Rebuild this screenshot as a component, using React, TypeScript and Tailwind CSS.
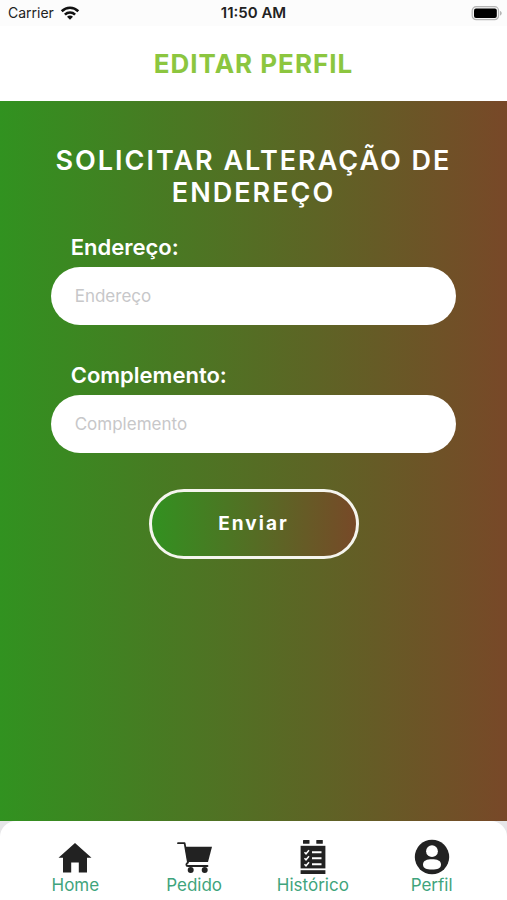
import { useState } from 'react';
import type { FormEvent } from 'react';

const HomeIcon = () => (
  <svg viewBox="0 0 36 36" className="size-9" fill="#222" aria-hidden="true">
    <path d="M18 4 1.500 18.700H6V33.500H14.200V23.500H21.800V33.500H30V18.700H34.500Z" />
  </svg>
);

const CartIcon = () => (
  <svg viewBox="0 0 36 36" className="size-9" fill="#222" aria-hidden="true">
    <path d="M9 7.800H36L32 23H11.500Z" />
    <path
      d="M2 4.200H8.600L12 23.600C9.800 24.600 9.800 27 12 27H31.500"
      fill="none"
      stroke="#222"
      strokeWidth="1.800"
      strokeLinecap="round"
      strokeLinejoin="round"
    />
    <circle cx="14.700" cy="31" r="3" />
    <circle cx="28.700" cy="31" r="3" />
  </svg>
);

const HistoryIcon = () => (
  <svg viewBox="0 0 36 36" className="size-9" fill="#222" aria-hidden="true">
    <rect x="8" y="1" width="6.500" height="3.800" rx="0.500" />
    <rect x="21.300" y="1" width="6.500" height="3.800" rx="0.500" />
    <rect x="5.600" y="6.800" width="24.800" height="22.600" />
    <rect x="5.600" y="31.200" width="24.800" height="3.800" />
    <g fill="none" stroke="#fff" strokeWidth="1.500">
      <path d="M9.500 13.200 11 14.800 14 11.200M9.500 19.200 11 20.800 14 17.200M9.500 25.200 11 26.800 14 23.200" />
      <path d="M17 13.300H26.500M17 19.300H26.500M17 25.300H26.500" strokeWidth="2" />
    </g>
  </svg>
);

const ProfileIcon = () => (
  <svg viewBox="0 0 36 36" className="size-9" fill="#222" aria-hidden="true">
    <circle cx="18" cy="18" r="17.200" />
    <circle cx="18" cy="12.200" r="5.900" fill="#fff" />
    <path
      d="M9 25.500C9 21.500 13 20.200 18 20.200S27 21.500 27 25.500C27 29.500 23.500 30.500 18 30.500S9 29.500 9 25.500Z"
      fill="#fff"
    />
  </svg>
);

const WifiIcon = () => (
  <svg viewBox="0 0 20 16" className="w-5 h-4" aria-hidden="true">
    <g fill="none" stroke="#111" strokeWidth="2.600">
      <path d="M1.700 6.200C6.500 1.600 13.500 1.600 18.300 6.200" />
      <path d="M4.900 9.600C7.800 6.800 12.200 6.800 15.100 9.600" />
    </g>
    <path d="M7 11.700C8.700 10.200 11.300 10.200 13 11.700L10 14.700Z" fill="#111" />
  </svg>
);

const BatteryIcon = () => (
  <svg viewBox="0 0 32 16" className="w-8 h-4" aria-hidden="true">
    <rect x="1.200" y="1.700" width="26.400" height="13" rx="4" fill="#f5f5f5" stroke="#b5b5b5" strokeWidth="1.200" />
    <rect x="3" y="3.500" width="22.800" height="9.400" rx="2" fill="#000" />
    <path d="M29 6V10.500C31.300 9.800 31.300 6.700 29 6Z" fill="#b5b5b5" />
  </svg>
);

const tabs = [
  { href: '#home', label: 'Home', Icon: HomeIcon },
  { href: '#pedido', label: 'Pedido', Icon: CartIcon },
  { href: '#historico', label: 'Histórico', Icon: HistoryIcon },
  { href: '#perfil', label: 'Perfil', Icon: ProfileIcon }
];

type FieldProps = {
  id: string;
  label: string;
  value: string;
  onChange: (value: string) => void;
};

const Field = ({ id, label, value, onChange }: FieldProps) => (
  <div className="w-4/5 flex flex-col gap-1.5">
    <label htmlFor={id} className="pl-5 text-[22px] leading-7 font-semibold">
      {label}:
    </label>
    <input
      id={id}
      type="text"
      placeholder={label}
      value={value}
      onChange={(e) => onChange(e.target.value)}
      className="w-full h-[58px] rounded-full bg-white px-6 text-[17px] text-gray-800 placeholder:text-[#c7c7c9] outline-none"
    />
  </div>
);

export default function App() {
  const [endereco, setEndereco] = useState('');
  const [complemento, setComplemento] = useState('');

  const handleSubmit = (e: FormEvent) => {
    e.preventDefault();
  };

  return (
    <div className="min-h-screen flex flex-col bg-white font-['Inter',sans-serif]">
      <div className="h-[26px] grid grid-cols-3 items-center bg-[#fcfcfc] px-1 text-sm text-[#222]">
        <div className="flex items-center gap-1.5 pl-1">
          <span>Carrier</span>
          <WifiIcon />
        </div>
        <span className="text-center text-[15px] font-semibold">11:50 AM</span>
        <div className="flex justify-end">
          <BatteryIcon />
        </div>
      </div>

      <header className="h-[75px] flex items-center justify-center">
        <h1 className="text-[26px] leading-8 font-bold tracking-[1px] text-[#8cc63f]">EDITAR PERFIL</h1>
      </header>

      <main className="flex-1 bg-linear-to-r/srgb from-[#319220] to-[#784828] text-white">
        <form onSubmit={handleSubmit} className="flex flex-col items-center gap-9 pt-11 pb-9">
          <div className="w-full flex flex-col items-center gap-6">
            <h2 className="px-10 text-center text-[27px] leading-8 font-semibold tracking-[2px]">
              SOLICITAR ALTERAÇÃO DE ENDEREÇO
            </h2>
            <Field id="endereco" label="Endereço" value={endereco} onChange={setEndereco} />
          </div>
          <Field id="complemento" label="Complemento" value={complemento} onChange={setComplemento} />
          <button
            type="submit"
            className="w-[210px] h-[70px] rounded-full border-3 border-[#f5f5ee] bg-linear-to-r/srgb from-[#319220] to-[#784828] bg-origin-border text-[19px] font-bold tracking-[2px]"
          >
            Enviar
          </button>
        </form>
      </main>

      <div className="bg-[#e6e6e8]">
        <nav className="h-[79px] flex rounded-t-2xl bg-white px-4 pt-[18px]">
          {tabs.map(({ href, label, Icon }) => (
            <a key={href} href={href} className="flex-1 flex flex-col items-center text-[17px] leading-5 text-[#3fa47c]">
              <Icon />
              {label}
            </a>
          ))}
        </nav>
      </div>
    </div>
  );
}
